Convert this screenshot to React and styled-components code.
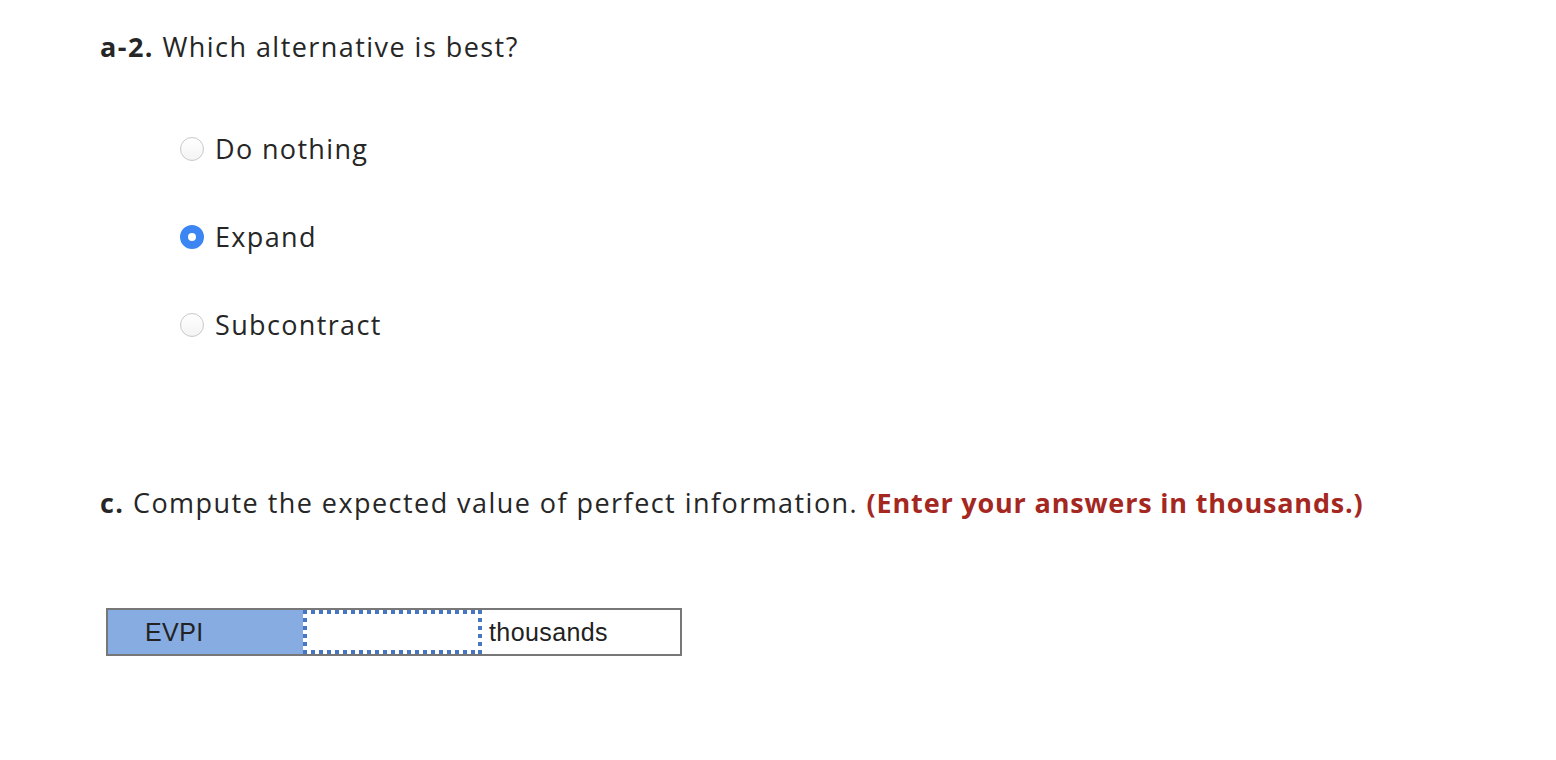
import React from "react";
import styled, { createGlobalStyle } from "styled-components";

const Global = createGlobalStyle`
  html, body { margin: 0; padding: 0; background: #fff; }
  body { font-family: "Open Sans", "Liberation Sans", sans-serif; color: #262626; }
`;

const Page = styled.div`
  padding: 28px 0 0 100px;
`;

const Question = styled.p`
  margin: 0;
  font-size: 27px;
  line-height: 38px;
  letter-spacing: 1.45px;
`;

const Label = styled.b`
  font-weight: 700;
`;

const Note = styled.b`
  font-weight: 700;
  color: #a4281f;
  letter-spacing: 0.82px;
`;

const Options = styled.div`
  display: flex;
  flex-direction: column;
  gap: 52px;
  margin: 65px 0 0 80px;
`;

const Option = styled.label`
  display: flex;
  align-items: center;
  gap: 11px;
  font-size: 27px;
  line-height: 36px;
  letter-spacing: 1.35px;
`;

const Radio = styled.span`
  width: 24px;
  height: 24px;
  box-sizing: border-box;
  border-radius: 50%;
  flex: none;
  ${({ $checked }) =>
    $checked
      ? `background: #fff; border: 8px solid #3c86f4;`
      : `background: linear-gradient(#fff, #f4f4f4); border: 1px solid #c9c9c9;`}
`;

const Section = styled.div`
  margin-top: 141px;
`;

const AnswerTable = styled.div`
  margin: 86px 0 0 6px;
  width: 576px;
  height: 48px;
  box-sizing: border-box;
  border: 2px solid #777;
  display: grid;
  grid-template-columns: 195px 179px 1fr;
  font-family: "Liberation Sans", Arial, sans-serif;
  font-size: 25px;
  letter-spacing: 0.4px;
  color: #222;
`;

const HeaderCell = styled.div`
  background: #87ace1;
  display: flex;
  align-items: center;
  padding-left: 37px;
`;

const dotsH = "repeating-linear-gradient(90deg, #4677c2 0 4px, transparent 4px 8px)";
const dotsV = "repeating-linear-gradient(180deg, #4677c2 0 4px, transparent 4px 8px)";

const InputCell = styled.div`
  background:
    ${dotsH} left top / 100% 4px no-repeat,
    ${dotsH} left bottom / 100% 4px no-repeat,
    ${dotsV} left top / 4px 100% no-repeat,
    ${dotsV} right top / 4px 100% no-repeat,
    #fff;
`;

const UnitCell = styled.div`
  display: flex;
  align-items: center;
  padding-left: 7px;
`;

export default function App() {
  return (
    <>
      <Global />
      <Page>
        <Question>
          <Label>a-2.</Label> Which alternative is best?
        </Question>
        <Options>
          <Option>
            <Radio />
            Do nothing
          </Option>
          <Option>
            <Radio $checked />
            Expand
          </Option>
          <Option>
            <Radio />
            Subcontract
          </Option>
        </Options>
        <Section>
          <Question>
            <Label>c.</Label> Compute the expected value of perfect information.{" "}
            <Note>(Enter your answers in thousands.)</Note>
          </Question>
          <AnswerTable>
            <HeaderCell>EVPI</HeaderCell>
            <InputCell />
            <UnitCell>thousands</UnitCell>
          </AnswerTable>
        </Section>
      </Page>
    </>
  );
}
